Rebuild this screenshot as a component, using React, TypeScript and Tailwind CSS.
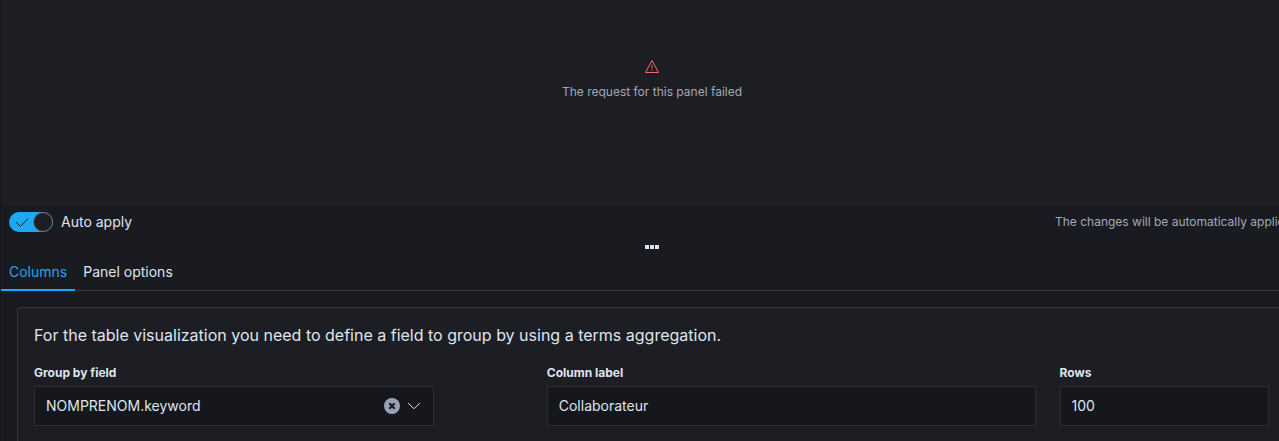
import { useState } from 'react'

const tabs = ['Columns', 'Panel options']

const inputClass =
  'block h-10 w-full rounded-none border border-[#2c2e35] bg-[#16171c] px-[11px] text-sm text-[#dfe5ef] outline-none focus:border-[#1ba9f5]'
const labelClass = 'mb-1 block text-xs leading-[18px] font-bold text-[#dfe5ef]'

function ErrorPanel() {
  return (
    <div className="flex h-[205px] flex-col items-center bg-[#1d1e24] pt-[59px] pl-6">
      <svg className="h-4 w-4" viewBox="0 0 16 16" fill="none" stroke="#f66" aria-hidden="true">
        <path d="M8 1.5 14.5 13.5H1.5Z" strokeLinejoin="round" />
        <path d="M7.5 5.5h1V10h-1Z" fill="#f66" stroke="none" opacity="0.8" />
        <path d="M7.5 11h1v1h-1Z" fill="#f66" stroke="none" />
      </svg>
      <p className="mt-2 text-xs leading-[18px] text-[#a0a9b9]">The request for this panel failed</p>
    </div>
  )
}

function AutoApply() {
  const [checked, setChecked] = useState(true)

  return (
    <div className="flex h-[34px] items-center pl-2">
      <label className="flex cursor-pointer items-center gap-2 text-sm text-[#dfe5ef]">
        <input
          type="checkbox"
          role="switch"
          className="peer sr-only"
          checked={checked}
          onChange={e => setChecked(e.target.checked)}
        />
        <span className={`flex h-5 w-11 rounded-full ${checked ? 'bg-[#1ba9f5]' : 'flex-row-reverse bg-[#535966]'}`}>
          <svg className="h-5 w-6" viewBox="0 0 24 20" fill="none" stroke="#1a1b20" aria-hidden="true">
            {checked ? <path d="m7 10 4.5 4.5 7.5-8" /> : <path d="m9 7 6 6m0-6-6 6" />}
          </svg>
          <span className="h-5 w-5 rounded-full border border-[#69707d] bg-[#1d1e24]" />
        </span>
        Auto apply
      </label>
      <p className="ml-auto w-56 overflow-hidden text-xs leading-[18px] whitespace-nowrap text-[#a0a9b9]">
        The changes will be automatically applied.
      </p>
    </div>
  )
}

function GroupByField() {
  const [field, setField] = useState('NOMPRENOM.keyword')

  return (
    <div>
      <label htmlFor="group-by" className={labelClass}>Group by field</label>
      <div className="relative max-w-[400px]">
        <select
          id="group-by"
          className={`${inputClass} appearance-none pr-14`}
          value={field}
          onChange={e => setField(e.target.value)}
        >
          <option value="" />
          <option>NOMPRENOM.keyword</option>
        </select>
        <button
          type="button"
          aria-label="Clear input"
          className="absolute top-3 right-[34px] flex h-4 w-4 items-center justify-center rounded-full bg-[#98a2b3]"
          onClick={() => setField('')}
        >
          <svg className="h-2 w-2" viewBox="0 0 8 8" stroke="#16171c" strokeWidth="2" aria-hidden="true">
            <path d="m1.3 1.3 5.4 5.4m0-5.4L1.3 6.7" />
          </svg>
        </button>
        <svg
          className="pointer-events-none absolute top-3 right-3 h-4 w-4"
          viewBox="0 0 16 16"
          fill="none"
          stroke="#dfe5ef"
          strokeLinecap="round"
          strokeLinejoin="round"
          aria-hidden="true"
        >
          <path d="m2.4 5.4 5.1 4.9q.5.4 1 0l5.1-4.9" />
        </svg>
      </div>
    </div>
  )
}

export default function App() {
  const [activeTab, setActiveTab] = useState('Columns')

  return (
    <div className="min-h-screen overflow-hidden border-l border-[#16171b] bg-[#1a1b20] font-[Inter,sans-serif]">
      <ErrorPanel />
      <AutoApply />

      <div className="flex h-4 items-center justify-center pl-6">
        <button type="button" aria-label="Resize panel" className="flex cursor-row-resize gap-px">
          <span className="h-1 w-1 bg-[#dfe5ef]" />
          <span className="h-1 w-1 bg-[#dfe5ef]" />
          <span className="h-1 w-1 bg-[#dfe5ef]" />
        </button>
      </div>

      <div role="tablist" className="flex h-9 border-b border-[#343741]">
        {tabs.map(tab => (
          <button
            key={tab}
            role="tab"
            type="button"
            aria-selected={activeTab === tab}
            onClick={() => setActiveTab(tab)}
            className={`-mb-px border-b-2 px-2 text-sm leading-5 ${
              activeTab === tab ? 'border-[#1ba9f5] text-[#1ba9f5]' : 'border-transparent text-[#dfe5ef]'
            }`}
          >
            {tab}
          </button>
        ))}
      </div>

      <div className="mt-4 ml-4 min-h-[134px] rounded-tl border-t border-l border-[#343741] bg-[#1d1e24] pt-4 pr-[10px] pb-4 pl-4">
        <p className="text-base leading-[22px] text-[#dfe5ef]">
          For the table visualization you need to define a field to group by using a terms aggregation.
        </p>
        <div className="mt-[18px] grid grid-cols-[minmax(0,7fr)_minmax(0,7fr)_minmax(0,3fr)] gap-6">
          <GroupByField />
          <div>
            <label htmlFor="column-label" className={labelClass}>Column label</label>
            <input id="column-label" type="text" className={`${inputClass} pb-0.5`} defaultValue="Collaborateur" />
          </div>
          <div>
            <label htmlFor="rows" className={labelClass}>Rows</label>
            <input id="rows" type="text" inputMode="numeric" className={`${inputClass} pb-0.5`} defaultValue="100" />
          </div>
        </div>
      </div>
    </div>
  )
}
